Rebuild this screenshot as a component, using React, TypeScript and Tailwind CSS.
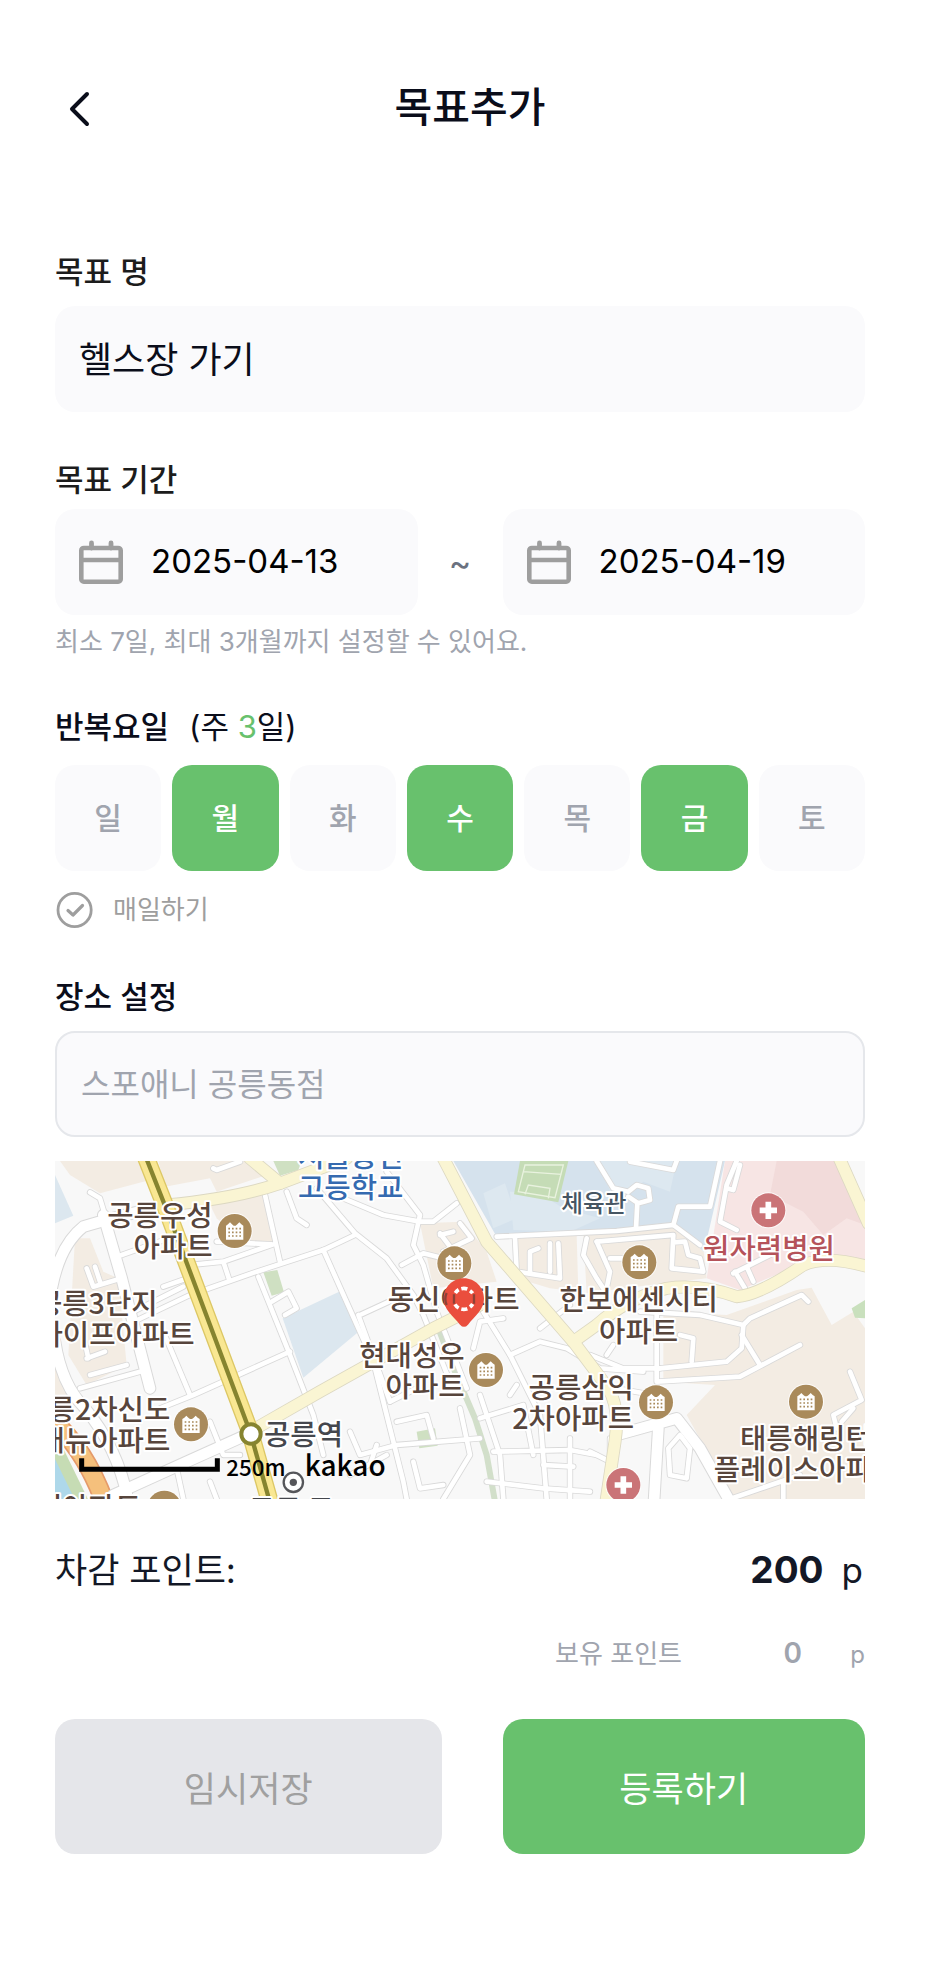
import { useState } from "react";

const DAYS = ["일", "월", "화", "수", "목", "금", "토"];

function CalendarIcon() {
  return (
    <svg viewBox="0 0 44 44" className="size-11 shrink-0 text-[#9e9e9e]" fill="none" stroke="currentColor" strokeLinecap="round" aria-hidden="true">
      <rect x="2.3" y="8" width="39.4" height="33.7" rx="2.5" strokeWidth="4.6" />
      <path d="M3 20H41" strokeWidth="4.4" />
      <path d="M12.500 3V8M32 3V8" strokeWidth="4.8" />
    </svg>
  );
}

const AREAS: [string, string][] = [
  ["#f3ece3", "M30 18H275L300 75L150 115L60 60Z"],
  ["#f3ece3", "M325 18H620L650 60L500 110L480 70L345 95Z"],
  ["#f3ece3", "M480 150L640 120L668 262L590 270L500 190Z"],
  ["#f3ece3", "M75 250L120 250L160 350L205 370L230 630L110 690L55 600Z"],
  ["#f3ece3", "M15 640L70 760L15 790Z"],
  ["#dce7ef", "M15 60L70 182L15 205Z"],
  ["#dce7ef", "M698 490L872 408L932 525L760 668Z"],
  ["#f3ece3", "M1110 205L1240 200L1310 290L1340 380L1150 400Z"],
  ["#f3ece3", "M1400 250L1580 240L1585 410L1500 400L1400 370Z"],
  ["#f3ece3", "M1600 235L1870 210L1960 280L1970 370L1800 390L1610 415Z"],
  ["#f3ece3", "M1840 470L2030 480L2240 405L2285 398L2345 510L2410 470L2445 520V1032H2050L1910 780L1995 690L1840 680Z"],
  ["#d5e2ed", "M1210 18H2025L1962 290L1870 210L1340 245Z"],
  ["#dde8f0", "M1380 110H1460L1540 160L1650 190L1560 230L1390 225Z"],
  ["#dde8f0", "M1300 115L1365 85L1400 190L1330 220Z"],
  ["#dde8f0", "M1640 18H1880L1860 110L1780 80L1700 150Z"],
  ["#f7e5e4", "M2025 18H2355L2445 200V312L2320 300L2070 405L1970 370Z"],
  ["#f2dbda", "M2180 18H2355L2445 210L2390 190L2320 240L2260 170L2160 120Z"],
  ["#c5dcb6", "M1410 18H1555L1525 142L1392 118Z"],
  ["#cfe0c2", "M640 352L682 345L702 412L665 422Z"],
  ["#cfe0c2", "M670 18H755L745 45L690 62Z"],
  ["#cfe0c2", "M1100 830L1155 820L1163 872L1108 880Z"],
  ["#c9e0bd", "M2405 460L2445 435V490L2415 488Z"],
  ["#aed8ea", "M15 900L85 1032H15Z"],
];

const MINOR_ROADS = [
  "M120 112L150 130L165 180",
  "M490 40L500 45L570 20",
  "M215 300L370 245M340 395L440 360",
  "M215 370L130 395L110 340M135 335L150 380",
  "M420 330L520 320L538 375M500 260L665 268M520 320L670 268",
  "M230 510L420 420L620 350L820 285L915 240",
  "M230 480L400 395",
  "M645 120L690 320M710 110L740 190L770 210",
  "M625 365L720 600L790 780L820 900",
  "M665 440L715 410L740 460L705 480",
  "M720 590L430 720L330 760",
  "M340 530L420 720",
  "M90 700L270 650M120 660L230 630",
  "M110 610L165 590M105 565L115 610",
  "M800 100L915 235L1010 310L1090 420L1120 480L1200 680",
  "M820 285L970 620L1060 980L1070 1032",
  "M930 480L1060 420M925 480L1020 740",
  "M880 130L1000 180L1110 200L1150 200L1220 145",
  "M1010 50L1110 180L1090 270L1120 330L1160 470L1250 700",
  "M1055 330L1120 295L1180 310M1170 235L1200 275M1230 205L1265 250L1180 290M1170 240L1210 230",
  "M1340 245L1700 228L1870 210L1950 270",
  "M1395 250L1400 350L1530 370L1525 265",
  "M1440 350V290L1465 280M1500 265V350",
  "M1610 250L1600 300L1640 370L1660 400",
  "M1360 490L1290 500L1270 580",
  "M1300 470L1380 600L1470 780L1490 1032",
  "M1380 600L1470 560L1550 580L1650 640L1780 650",
  "M1470 520L1560 450",
  "M1290 720L1310 780L1350 900L1360 1032",
  "M1020 740L1100 700M1040 800L1130 780L1150 850",
  "M900 830L930 900L1040 870L1290 850",
  "M1290 790L1420 750L1450 900M1330 890L1560 885L1640 900",
  "M1310 980L1480 1000L1620 1010M1480 930L1570 935",
  "M1090 920L1110 1000L1180 990M980 870L960 930",
  "M1400 690L1380 720M1560 850V1032",
  "M900 960L1010 900",
  "M1230 760L1260 900L1180 1032",
  "M1640 18L1690 100L1735 110L1760 90L1795 100L1800 135L1765 145L1735 125M1762 145L1758 220",
  "M1880 18L1870 45L1740 20M2010 18L1980 155H1885L1870 210",
  "M2060 18L2030 90L2010 200L2060 225M2070 30L2050 105L2030 100",
  "M1640 260L1870 240L1865 340L1960 350L1950 310L1915 300L1905 260L1870 262",
  "M1640 260L1680 350L1670 400M1680 310H1720",
  "M2055 350L2085 400M2090 335L2110 380M2050 355L2180 290",
  "M1770 470L1950 480L2080 510L2100 490L2255 420L2275 440",
  "M2080 510L2075 580L2030 620L1830 640M1820 480V680L2070 665L2250 570",
  "M2075 540L2130 630M1890 540L1930 550L1925 620",
  "M1620 600L1720 640H1830M1700 700L1810 720M1670 600L1690 570",
  "M2400 650L2435 735L2350 780L2360 820M2410 760L2375 800",
  "M1860 960L1855 880L1890 840L1920 880L1910 970Z",
  "M2200 980V1032M2040 1032L2250 960M1620 890L1680 920V850",
  "M480 800L520 900L570 900",
  "M380 940L400 1032M480 980L500 1032",
];

const MAIN_ROADS = [
  "M5 400Q30 270 100 215Q180 190 350 150",
  "M15 560Q35 690 105 760Q205 880 235 1040",
  "M160 180L215 370L300 700",
  "M190 1020L400 925L600 835",
  "M1700 840L1880 790L1950 880L2040 1040",
  "M1825 820L1812 1040",
];

const YELLOW_ROADS = [
  "M350 150Q560 130 690 85L890 10",
  "M600 10L690 85",
  "M600 830L810 710L1150 520L1290 450",
  "M1180 10L1310 260L1570 560L1675 700Q1710 760 1695 860L1668 1040",
  "M1570 560L1640 510Q1730 430 1850 400Q1950 385 2060 425Q2130 420 2260 330Q2330 300 2455 335",
  "M2368 10L2455 205",
];

const APARTMENTS = [
  [554, 228], [423, 808], [1213, 325], [1308, 645],
  [1768, 322], [1818, 742], [2268, 740], [343, 1058],
];

const HOSPITALS = [[2155, 166], [1720, 990]];

type Anchor = "start" | "middle" | "end";

const LABELS: { text: string; x: number; y: number; anchor: Anchor; fill: string; size: number }[] = [
  { text: "공릉우성", x: 488, y: 213, anchor: "end", fill: "#57453c", size: 86 },
  { text: "아파트", x: 488, y: 307, anchor: "end", fill: "#57453c", size: 86 },
  { text: "공릉3단지", x: 323, y: 476, anchor: "end", fill: "#57453c", size: 86 },
  { text: "라이프아파트", x: 434, y: 570, anchor: "end", fill: "#57453c", size: 86 },
  { text: "공릉2차신도", x: 361, y: 795, anchor: "end", fill: "#57453c", size: 86 },
  { text: "브래뉴아파트", x: 361, y: 889, anchor: "end", fill: "#57453c", size: 86 },
  { text: "성아파트", x: 274, y: 1090, anchor: "end", fill: "#57453c", size: 86 },
  { text: "공릉역", x: 642, y: 870, anchor: "start", fill: "#45474d", size: 86 },
  { text: "공릉 골", x: 596, y: 1098, anchor: "start", fill: "#45474d", size: 86 },
  { text: "서울공연", x: 902, y: 37, anchor: "middle", fill: "#356ab0", size: 86 },
  { text: "고등학교", x: 902, y: 130, anchor: "middle", fill: "#356ab0", size: 86 },
  { text: "체육관", x: 1632, y: 170, anchor: "middle", fill: "#465562", size: 71 },
  { text: "동신아파트", x: 1211, y: 465, anchor: "middle", fill: "#57453c", size: 86 },
  { text: "현대성우", x: 1244, y: 632, anchor: "end", fill: "#57453c", size: 86 },
  { text: "아파트", x: 1244, y: 727, anchor: "end", fill: "#57453c", size: 86 },
  { text: "한보에센시티", x: 1766, y: 465, anchor: "middle", fill: "#57453c", size: 86 },
  { text: "아파트", x: 1766, y: 560, anchor: "middle", fill: "#57453c", size: 86 },
  { text: "공릉삼익", x: 1752, y: 730, anchor: "end", fill: "#57453c", size: 86 },
  { text: "2차아파트", x: 1752, y: 822, anchor: "end", fill: "#57453c", size: 86 },
  { text: "태릉해링턴", x: 2070, y: 881, anchor: "start", fill: "#57453c", size: 86 },
  { text: "플레이스아파트", x: 1991, y: 976, anchor: "start", fill: "#57453c", size: 86 },
  { text: "원자력병원", x: 2157, y: 311, anchor: "middle", fill: "#b5535a", size: 86 },
];

function PlaceMap() {
  return (
    <svg viewBox="15 18 2430 1014" className="block w-full font-['Noto_Sans_CJK_KR',sans-serif]" role="img" aria-label="공릉동 지도">
      <rect x="15" y="18" width="2430" height="1014" fill="#f8f8f8" />
      {AREAS.map(([fill, d]) => <path key={d} d={d} fill={fill} />)}
      <path d="M1425 118L1435 90L1500 100L1495 130M1425 30H1540L1515 128L1405 110ZM1420 50L1535 58" stroke="#e9f2df" strokeWidth="4" fill="none" />
      <path d="M5 850L100 1045" stroke="#c6dcb4" strokeWidth="36" fill="none" />
      <path d="M0 790Q105 880 165 1045" stroke="#e59a6a" strokeWidth="60" fill="none" />
      <path d="M0 790Q105 880 165 1045" stroke="#f5c07c" strokeWidth="50" fill="none" />
      <path d="M1165 520L1215 650L1275 790L1310 900L1335 1040" stroke="#d2dfca" strokeWidth="18" fill="none" />
      <g fill="none" strokeLinecap="round" strokeLinejoin="round">
        <g stroke="#d9d9d9">
          {MINOR_ROADS.map((d) => <path key={d} d={d} strokeWidth="19" />)}
          {MAIN_ROADS.map((d) => <path key={d} d={d} strokeWidth="38" />)}
        </g>
        <g stroke="#ffffff">
          {MINOR_ROADS.map((d) => <path key={d} d={d} strokeWidth="14" />)}
          {MAIN_ROADS.map((d) => <path key={d} d={d} strokeWidth="32" />)}
        </g>
        <g stroke="#dcd8c2" strokeWidth="39">{YELLOW_ROADS.map((d) => <path key={d} d={d} />)}</g>
        <g stroke="#faf5d3" strokeWidth="34">{YELLOW_ROADS.map((d) => <path key={d} d={d} />)}</g>
        <path d="M285 0L360 190L600 830L662 1050" stroke="#dcc765" strokeWidth="54" />
        <path d="M285 0L360 190L600 830L662 1050" stroke="#f9e792" strokeWidth="46" />
        <path d="M285 0L360 190L600 830L662 1050" stroke="#86842f" strokeWidth="13" />
      </g>
      <circle cx="603" cy="837" r="29" fill="#fff" stroke="#86842f" strokeWidth="12" />
      {APARTMENTS.map(([x, y]) => (
        <g key={`${x}-${y}`} transform={`translate(${x} ${y})`}>
          <circle r="54" fill="#fff" opacity="0.8" />
          <circle r="51" fill="#a98a5b" />
          <path d="M-26 26V-16L-20 -20L-14 -26L-8 -20L-3 -16H3L8 -20L14 -26L20 -20L26 -16V26Z" fill="#fff" />
          <path d="M-19 -7H20M-19 4H20M-19 15H20" stroke="#a98a5b" strokeWidth="5" strokeDasharray="5 6" />
        </g>
      ))}
      {HOSPITALS.map(([x, y]) => (
        <g key={`${x}-${y}`} transform={`translate(${x} ${y})`}>
          <circle r="54" fill="#fff" opacity="0.8" />
          <circle r="51" fill="#ca7477" />
          <path d="M-26 0H26M0 -26V26" stroke="#fff" strokeWidth="17" />
        </g>
      ))}
      <g fontWeight="500" stroke="#ffffff" strokeWidth="12" strokeLinejoin="round" paintOrder="stroke">
        {LABELS.map((l) => (
          <text key={`${l.text}-${l.y}-${l.x}`} x={l.x} y={l.y} textAnchor={l.anchor} fontSize={l.size} fill={l.fill}>{l.text}</text>
        ))}
      </g>
      <circle cx="730" cy="982" r="29" fill="#fff" stroke="#55565a" strokeWidth="7" />
      <circle cx="730" cy="982" r="11" fill="#55565a" />
      <path d="M95 910V943H502V910" fill="none" stroke="#000" strokeWidth="15" />
      <g fontWeight="500" fill="#000">
        <text x="529" y="964" fontSize="67">250m</text>
        <text x="764" y="964" fontSize="84">kakao</text>
      </g>
      <path d="M1242 370C1208 370 1181 397 1181 431C1181 464 1208 480 1230 509Q1242 522 1254 509C1276 480 1302 464 1302 431C1302 397 1275 370 1242 370Z" fill="#ea4e3d" />
      <path d="M1190 414Q1182 431 1190 450" fill="none" stroke="#8d4237" strokeWidth="7" />
      <path d="M1216 414A31 31 0 0 1 1226 404M1234 401A31 31 0 0 1 1252 402M1260 407A31 31 0 0 1 1268 415M1215 448A31 31 0 0 0 1226 459M1234 462A31 31 0 0 0 1252 461M1260 456A31 31 0 0 0 1268 447" fill="none" stroke="#fff" strokeWidth="11" />
      <path d="M1212 418V446M1272 418V446" fill="none" stroke="#8d4237" strokeWidth="7" />
    </svg>
  );
}

export default function App() {
  const [selected, setSelected] = useState([1, 3, 5]);
  const [daily, setDaily] = useState(false);

  const toggle = (day: number) =>
    setSelected((current) => (current.includes(day) ? current.filter((d) => d !== day) : [...current, day]));

  return (
    <main className="min-h-screen bg-white pt-20 pr-[63px] pb-28 pl-[55px] font-['Inter','Noto_Sans_CJK_KR',sans-serif] text-[#0a0d1a]">
      <header className="grid grid-cols-[48px_1fr_48px] items-center">
        <button type="button" aria-label="뒤로" className="flex size-12 items-center justify-center">
          <svg viewBox="0 0 48 48" className="size-12" fill="none" stroke="currentColor" strokeWidth="4" strokeLinecap="round" strokeLinejoin="round" aria-hidden="true">
            <path d="M32 11L17 26L32 41" />
          </svg>
        </button>
        <h1 className="pl-5 text-center text-[41px] leading-[54px] font-medium">목표추가</h1>
      </header>

      <form onSubmit={(e) => e.preventDefault()}>
        <section className="mt-[118px]">
          <label htmlFor="goal" className="block text-[31px] leading-10 font-medium text-[#1c1c1c]">목표 명</label>
          <input id="goal" defaultValue="헬스장 가기" className="mt-[14px] block h-[106px] w-full rounded-[20px] bg-[#fafafc] px-6 pb-1 text-[36px] outline-none" />
        </section>

        <section className="mt-12">
          <h2 className="text-[31px] leading-10 font-medium text-[#1c1c1c]">목표 기간</h2>
          <div className="mt-[9px] grid grid-cols-[1fr_85px_1fr] items-center">
            <label className="flex h-[106px] items-center gap-7 rounded-[20px] bg-[#fafafc] px-6">
              <CalendarIcon />
              <input aria-label="시작일" defaultValue="2025-04-13" className="w-full min-w-0 bg-transparent text-[33px] text-black outline-none" />
            </label>
            <span className="text-center text-[34px] text-[#6b7280]">~</span>
            <label className="flex h-[106px] items-center gap-7 rounded-[20px] bg-[#fafafc] px-6">
              <CalendarIcon />
              <input aria-label="종료일" defaultValue="2025-04-19" className="w-full min-w-0 bg-transparent text-[33px] text-black outline-none" />
            </label>
          </div>
          <p className="mt-[9px] text-[26px] leading-9 text-[#a0a4ae]">최소 7일, 최대 3개월까지 설정할 수 있어요.</p>
        </section>

        <section className="mt-[47px]">
          <div className="flex gap-5 text-[31px] leading-10">
            <h2 className="font-medium">반복요일</h2>
            <span>(주 <span className="text-[#68c16d]">{selected.length}</span>일)</span>
          </div>
          <div className="mt-[18px] grid grid-cols-7 gap-[11px]">
            {DAYS.map((day, i) => (
              <button
                key={day}
                type="button"
                aria-pressed={selected.includes(i)}
                onClick={() => toggle(i)}
                className={`flex aspect-square items-center justify-center rounded-[20px] text-[30px] font-medium ${selected.includes(i) ? "bg-[#68c16d] text-white" : "bg-[#fafafc] text-[#a0a4ae]"}`}
              >
                {day}
              </button>
            ))}
          </div>
          <label className="mt-5 flex items-center gap-5 text-[26px] leading-9 text-[#9e9e9e]">
            <input type="checkbox" checked={daily} onChange={(e) => setDaily(e.target.checked)} className="sr-only" />
            <svg viewBox="0 0 38 38" className="size-[38px]" fill="none" stroke="currentColor" strokeLinecap="round" strokeLinejoin="round" aria-hidden="true">
              <circle cx="19.6" cy="19" r="16.6" strokeWidth="2.8" />
              <path d="M13 19.500L18 24L27.500 14.500" strokeWidth="3.2" />
            </svg>
            매일하기
          </label>
        </section>

        <section className="mt-12">
          <label htmlFor="place" className="block text-[31px] leading-10 font-medium">장소 설정</label>
          <input id="place" placeholder="스포애니 공릉동점" className="mt-[14px] block h-[106px] w-full rounded-[20px] border-2 border-[#e5e7eb] bg-[#fafafc] px-6 text-[32px] outline-none placeholder:text-[#a0a4ae]" />
          <div className="mt-6"><PlaceMap /></div>
        </section>

        <section className="mt-[47px]">
          <div className="flex items-baseline justify-between text-[35px] leading-[48px] text-[#131826]">
            <span>차감 포인트:</span>
            <span className="flex items-baseline gap-[18px] pr-[2px]">
              <strong className="text-[37px] font-bold">200</strong>
              <span>p</span>
            </span>
          </div>
          <div className="mt-[41px] flex items-baseline justify-end text-[26px] leading-9 text-[#a0a4ae]">
            <span>보유 포인트</span>
            <span className="w-[120px] text-right text-[28px] font-semibold">0</span>
            <span className="w-[63px] text-right text-[24px]">p</span>
          </div>
        </section>

        <div className="mt-[46px] grid grid-cols-[386fr_362fr] gap-[61px] text-[35px]">
          <button type="button" className="h-[135px] rounded-[20px] bg-[#e5e6ea] pt-1 text-[#a0a0a0]">임시저장</button>
          <button type="submit" className="h-[135px] rounded-[20px] bg-[#68c16d] pt-1 text-white">등록하기</button>
        </div>
      </form>
    </main>
  );
}
